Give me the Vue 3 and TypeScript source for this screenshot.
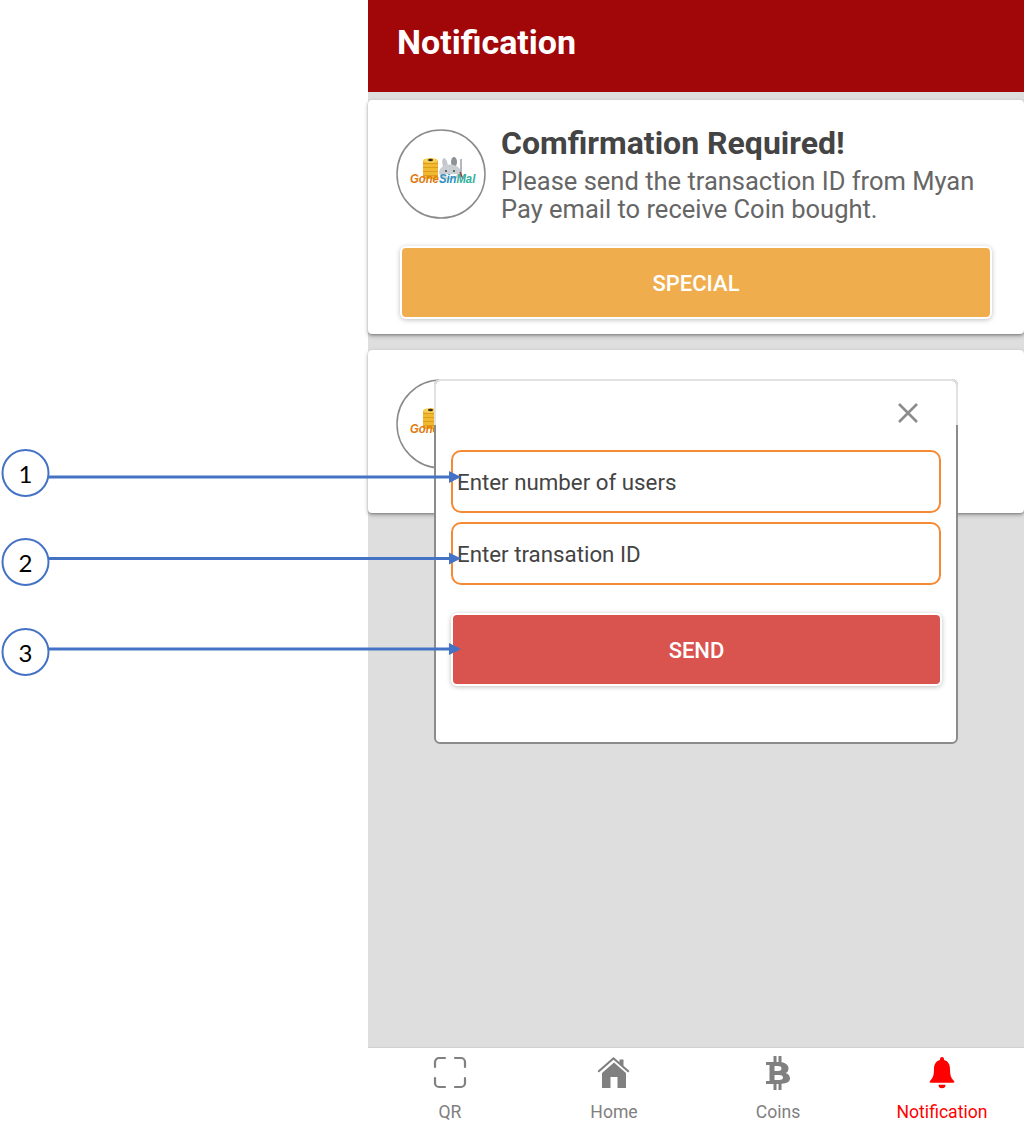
<script setup lang="ts">
interface NotificationItem {
  id: number;
  title?: string;
  message?: string;
  action?: string;
}

const notifications: NotificationItem[] = [
  {
    id: 1,
    title: 'Comfirmation Required!',
    message: 'Please send the transaction ID from Myan Pay email to receive Coin bought.',
    action: 'SPECIAL',
  },
  { id: 2 },
];

const callouts = [
  { n: 1, cy: 473, tip: 477 },
  { n: 2, cy: 562, tip: 558.5 },
  { n: 3, cy: 652, tip: 649 },
];
</script>

<template>
  <div class="page">
    <div class="gutter"></div>

    <div class="phone">
      <header class="topbar">Notification</header>

      <main class="content">
        <section v-for="item in notifications" :key="item.id" class="card">
          <div class="card-head">
            <svg class="logo" viewBox="0 0 90 90">
              <circle cx="45" cy="45" r="44" fill="#fff" stroke="#8a8a8a" stroke-width="1.5" />
              <!-- coin stack -->
              <rect x="27" y="30" width="15" height="20" rx="3" fill="#f0b92e" />
              <path d="M27 34.5h15M27 38.5h15M27 42.5h15M27 46.5h15" stroke="#d8941c" stroke-width="0.8" />
              <ellipse cx="34.5" cy="31.5" rx="7" ry="2.5" fill="#f7cf55" />
              <ellipse cx="34.5" cy="31" rx="2.5" ry="1.2" fill="#3a3020" />
              <!-- bunny -->
              <ellipse cx="49" cy="35" rx="2.6" ry="6" fill="#c4c8cc" transform="rotate(-12 49 35)" />
              <ellipse cx="58" cy="33" rx="3" ry="5" fill="#8d9296" />
              <ellipse cx="54" cy="43" rx="11" ry="7.5" fill="#c9ced2" />
              <path d="M47 45a7 4 0 0 0 14 0z" fill="#fff" />
              <circle cx="50" cy="42" r="0.9" fill="#333" />
              <circle cx="58" cy="42" r="0.9" fill="#333" />
              <path d="M65 30v18" stroke="#aab0b4" stroke-width="1.8" />
              <path d="M64 43l3 7" stroke="#a8323a" stroke-width="1.4" />
              <text class="logo-text" transform="translate(14 54) scale(0.87 1)"><tspan fill="#e07a10">Gone</tspan><tspan fill="#2a8fc0">Sin</tspan><tspan fill="#2fb09a">Mal</tspan></text>
            </svg>
            <div v-if="item.title" class="card-text">
              <h2 class="card-title">{{ item.title }}</h2>
              <p class="card-message">{{ item.message }}</p>
            </div>
          </div>
          <button v-if="item.action" class="btn btn-special">{{ item.action }}</button>
        </section>
      </main>

      <nav class="tabbar">
        <div class="tab">
          <svg class="tab-icon" viewBox="0 0 34 34" fill="none" stroke="currentColor" stroke-width="2.2" stroke-linecap="round">
            <path d="M2 11V6a4 4 0 0 1 4-4h6M22 2h6a4 4 0 0 1 4 4v5M32 22v5a4 4 0 0 1-4 4h-6M12 31H6a4 4 0 0 1-4-4v-5" />
          </svg>
          <span>QR</span>
        </div>
        <div class="tab">
          <svg class="tab-icon" viewBox="0 0 34 34" fill="currentColor">
            <path d="M16.5 1 .5 15l1.4 1.6L16.5 3.800l14.600 12.800L32.500 15l-6-5.300V3.500h-4v2.800z" />
            <path d="M17 6.5 5 17v15h8.500V21h7v11H29V17z" />
          </svg>
          <span>Home</span>
        </div>
        <div class="tab">
          <svg class="tab-icon" viewBox="0 0 34 34" fill="currentColor">
            <path fill-rule="evenodd" d="M5 6h7.500V0h3v6h2V0h3v6.200c4.500.6 7 3 7 6.300 0 2.400-1.100 3.800-3 4.600 2.700.8 4.500 2.700 4.500 5.200 0 3.600-3 5.200-8.500 5.500V34h-3v-6h-2v6h-3v-6H5v-3h3.500V9H5zm8.500 4v5h3.500c2.200 0 3.500-.8 3.500-2.500S19.200 10 17 10zm0 9v5h4.500c2.500 0 4-.8 4-2.500s-1.500-2.500-4-2.500z" />
          </svg>
          <span>Coins</span>
        </div>
        <div class="tab tab-active">
          <svg class="tab-icon" viewBox="0 0 34 34" fill="currentColor">
            <path d="M17 1a2 2 0 0 0-2 2v1c-4.500 1-6 5-6 9 0 6-1 9-4 12-.7.7-.3 1.800.8 1.800h22.400c1.100 0 1.500-1.100.8-1.800-3-3-4-6-4-12 0-4-1.500-8-6-9V3a2 2 0 0 0-2-2z" />
            <path d="M13.500 28.800h7a3.500 3.500 0 0 1-7 0z" />
          </svg>
          <span>Notification</span>
        </div>
      </nav>

      <div class="modal">
        <div class="modal-head">
          <svg class="close" viewBox="0 0 20 20" stroke="#8c8c8c" stroke-width="2.6" fill="none">
            <path d="M1 1l18 18M19 1 1 19" />
          </svg>
        </div>
        <div class="modal-body">
          <div class="field">Enter number of users</div>
          <div class="field">Enter transation ID</div>
          <button class="btn btn-send">SEND</button>
        </div>
      </div>
    </div>

    <svg class="callouts" width="1024" height="1125">
      <g v-for="c in callouts" :key="c.n">
        <circle cx="25.5" :cy="c.cy" r="23" fill="#fff" stroke="#4472c4" stroke-width="2" />
        <text x="25.5" :y="c.cy + 9.5" class="callout-num" text-anchor="middle">{{ c.n }}</text>
        <line x1="49" :y1="c.tip" x2="450" :y2="c.tip" stroke="#4472c4" stroke-width="3" />
        <path :d="`M449 ${c.tip - 6}l12 6-12 6z`" fill="#4472c4" />
      </g>
    </svg>
  </div>
</template>

<style scoped>
.page {
  position: relative;
  display: flex;
  width: 1024px;
  height: 1125px;
  overflow: hidden;
  background: #fff;
  font-family: Roboto, "Liberation Sans", sans-serif;
}

.gutter {
  width: 368px;
  flex: none;
}

.phone {
  position: relative;
  display: flex;
  flex-direction: column;
  flex: 1;
  min-width: 0;
}

.topbar {
  flex: none;
  height: 92px;
  padding-left: 29px;
  line-height: 85px;
  box-sizing: border-box;
  background: #a10609;
  color: #fff;
  font-size: 34px;
  font-weight: 700;
}

.content {
  flex: 1;
  display: flex;
  flex-direction: column;
  gap: 16px;
  padding-top: 8px;
  background: #dedede;
  border-bottom: 1px solid #d0d0d0;
}

.card {
  background: #fff;
  border-radius: 4px;
  box-shadow: 0 1px 2px rgba(0, 0, 0, 0.2), 0 2px 4px rgba(0, 0, 0, 0.3);
  padding: 29px 33px 16px 28px;
}

.card-head {
  display: flex;
  gap: 15px;
  min-height: 118px;
}

.logo {
  flex: none;
  width: 90px;
  height: 90px;
}

.logo-text {
  font-family: "Liberation Sans", sans-serif;
  font-size: 13px;
  font-weight: 700;
  font-style: italic;
}

.card-text {
  margin-top: -1px;
}

.card-title {
  margin: 0;
  color: #444;
  font-size: 32px;
  font-weight: 700;
  line-height: 30px;
}

.card-message {
  margin: 9px 0 0;
  color: #666;
  font-size: 25.5px;
  line-height: 28px;
}

.btn {
  display: block;
  height: 69px;
  padding: 1px 0 0;
  border: none;
  border-radius: 4px;
  color: #fff;
  font-family: inherit;
  font-size: 22px;
  font-weight: 500;
  box-shadow: 0 0 0 2px #fff, 0 1px 5px 2px rgba(0, 0, 0, 0.25);
}

.btn-special {
  width: 588px;
  margin: 1px 0 1px 6px;
  background: #f0ad4e;
}

.btn-send {
  width: 487px;
  margin: 21px 0 0 2px;
  background: #d9534f;
}

.tabbar {
  flex: none;
  display: grid;
  grid-template-columns: repeat(4, 164px);
  height: 77px;
  background: #fff;
}

.tab {
  display: flex;
  flex-direction: column;
  align-items: center;
  color: #808080;
  font-size: 17.6px;
  padding-top: 8px;
}

.tab-active {
  color: #f00;
}

.tab-icon {
  width: 34px;
  height: 34px;
  margin-bottom: 12px;
}

.modal {
  position: absolute;
  left: 66px;
  top: 379px;
  width: 524px;
  height: 365px;
  box-sizing: border-box;
  background: #fff;
  border: 2px solid #8c8c8c;
  border-radius: 6px;
}

.modal-head {
  display: flex;
  justify-content: flex-end;
  align-items: flex-start;
  height: 46px;
  margin: -2px -2px 0;
  padding: 22px 38px 0 0;
  box-sizing: border-box;
  border: 2px solid #e2e2e2;
  border-bottom: none;
  border-radius: 6px 6px 0 0;
}

.close {
  flex: none;
  width: 20px;
  height: 20px;
}

.modal-body {
  display: flex;
  flex-direction: column;
  gap: 9px;
  padding: 25px 15px 0;
}

.field {
  height: 63px;
  box-sizing: border-box;
  padding: 16px 0 0 4px;
  border: 2px solid #f58a35;
  border-radius: 10px;
  color: #444;
  font-size: 22.3px;
  line-height: 28px;
}

.callouts {
  position: absolute;
  left: 0;
  top: 0;
  pointer-events: none;
}

.callout-num {
  font-family: Lato, "Liberation Sans", sans-serif;
  font-size: 24px;
  fill: #000;
}
</style>
